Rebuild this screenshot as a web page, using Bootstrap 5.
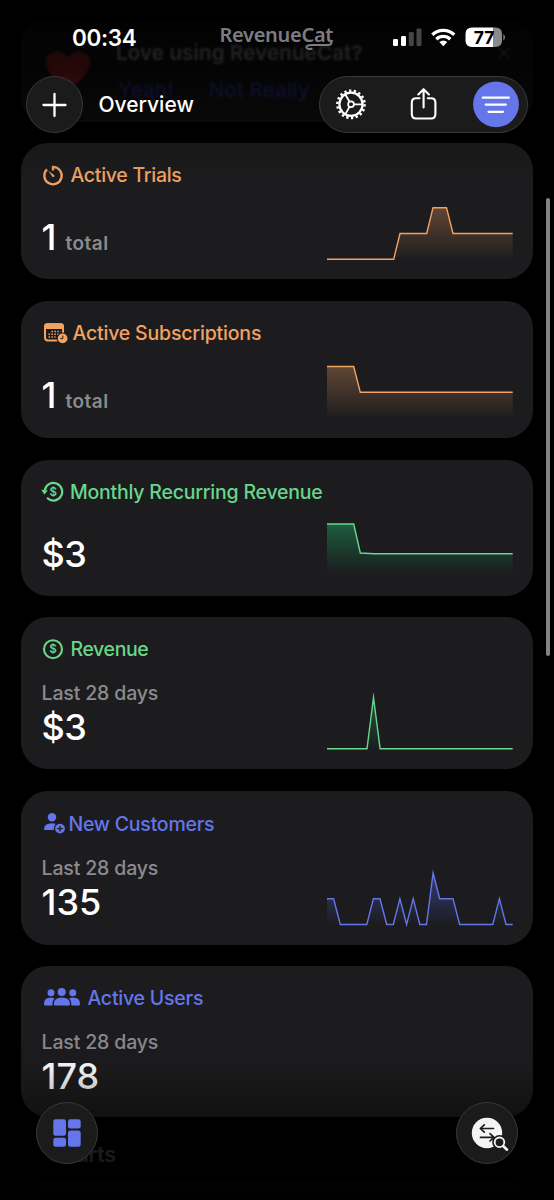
<!DOCTYPE html>
<html lang="en" data-bs-theme="dark">
<head>
<meta charset="utf-8">
<meta name="viewport" content="width=device-width, initial-scale=1">
<title>Overview</title>
<link href="https://cdn.jsdelivr.net/npm/bootstrap@5.3.0/dist/css/bootstrap.min.css" rel="stylesheet">
<style>
  body { background:#000; font-family:Inter,"Liberation Sans",sans-serif; color:#fff; }
  .screen { width:554px; height:1200px; }
  svg { display:block; overflow:visible; flex:none; }
  .feed { padding:20px 21px 0; }
  .promo { height:102px; border-radius:24px; background:#1c1c1e; margin-bottom:21px; padding:20px 20px 0 24px; font-size:20.5px; font-weight:600; line-height:26px; letter-spacing:.15px; }
  .promo > * { filter:blur(1.3px); }
  .promo-actions { margin-top:11px; gap:35px; color:#4247d8; padding-left:2px; font-weight:500; }
  .metric { background:#1c1c1e; border-radius:27px; padding:19px 20px 0 21px; }
  .ttl { height:26px; line-height:26px; font-size:19.5px; font-weight:500; white-space:nowrap; letter-spacing:-.22px; }
  .ttl span { margin-left:-.6px; }
  .ttl .t1 { letter-spacing:-.28px; } .ttl .t4 { letter-spacing:-.38px; } .ttl .t2 { letter-spacing:-.18px; }
  .sub { margin-top:19px; margin-left:-.5px; line-height:24px; font-size:19.5px; font-weight:500; color:#8b8b8e; white-space:nowrap; letter-spacing:-.15px; }
  .val { line-height:40px; font-size:36px; font-weight:450; margin-top:2px; margin-left:-.5px; }
  .val.solo { margin-top:29px; }
  .val.money { letter-spacing:-.6px; }
  .unit { font-size:19px; font-weight:600; color:#8b8b8e; margin-left:9px; letter-spacing:.5px; }
  .orange { color:#f2a261; } .green { color:#67d78a; } .indigo { color:#6476ea; }
  .spark { align-self:flex-end; margin-bottom:14px; width:186px; height:70px; }
  .spark polyline { fill:none; stroke:currentColor; stroke-width:1.4; stroke-miterlimit:10; }
  .shade-top { height:190px; background:linear-gradient(#000 0,rgba(0,0,0,.88) 40px,rgba(0,0,0,.86) 70px,rgba(0,0,0,.7) 120px,rgba(0,0,0,.16) 144px,rgba(0,0,0,0) 180px); }
  .shade-bottom { height:170px; background:linear-gradient(rgba(0,0,0,0) 0,rgba(0,0,0,.07) 40px,rgba(0,0,0,.4) 86px,rgba(0,0,0,.89) 118px,rgba(0,0,0,.93) 150px,#000 170px); }
  .status { height:76px; padding:0 50px 0 72px; }
  .clock { font-size:22.5px; font-weight:600; line-height:28px; margin-top:24px; width:147.500px; letter-spacing:-.35px; }
  .brand { font-family:"Noto Sans",sans-serif; font-size:20px; font-weight:600; line-height:28px; margin-top:21px; color:#7d7d80; width:160.500px; letter-spacing:-.3px; }
  .toolbar { height:57px; padding:0 26px; }
  .glass { background:#1b1b1c; border:1px solid #39393b; }
  .round { width:57px; height:57px; border-radius:50%; }
  .head { font-size:21px; font-weight:500; margin-left:15.500px; }
  .pill { width:209px; height:57px; border-radius:29px; }
  .dock { width:62px; height:62px; border-radius:50%; }
  .scrollbar { left:546px; top:198px; width:4px; height:458px; border-radius:2px; background:#838385; }
  .charts { height:64px; padding:23px 0 0 27px; font-size:21.500px; font-weight:600; line-height:28px; letter-spacing:-.3px; }
</style>
</head>
<body>
<div class="screen position-relative overflow-hidden">

  <svg width="0" height="0" class="position-absolute">
    <defs>
      <linearGradient id="go" x1="0" y1="0" x2="0" y2="1"><stop offset="0" stop-color="#f2a261" stop-opacity=".32"/><stop offset="1" stop-color="#f2a261" stop-opacity="0.02"/></linearGradient>
      <linearGradient id="gg" x1="0" y1="0" x2="0" y2="1"><stop offset="0" stop-color="#20a860" stop-opacity=".48"/><stop offset="1" stop-color="#109a60" stop-opacity="0.01"/></linearGradient>
      <linearGradient id="gi" x1="0" y1="0" x2="0" y2="1"><stop offset="0" stop-color="#5569ff" stop-opacity=".42"/><stop offset="1" stop-color="#5569ff" stop-opacity="0"/></linearGradient>
    </defs>
  </svg>

  <main class="feed">
    <section class="promo d-flex">
      <svg width="48" height="44" viewBox="0 0 48 44"><path d="M24 43C12 34 2 26 2 15C2 3 18 1 24 11C30 1 46 3 46 15C46 26 36 34 24 43Z" fill="#ff3540" transform="translate(-1 7)"/></svg>
      <div class="flex-grow-1" style="margin-left:23px">
        <div>Love using RevenueCat?</div>
        <div class="promo-actions d-flex"><span>Yeah!</span><span>Not Really</span></div>
      </div>
      <svg width="16" height="30" viewBox="0 0 16 30"><path d="M2 8L12 18M12 8L2 18" stroke="#777" stroke-width="2"/></svg>
    </section>

    <section class="metric d-flex justify-content-between" style="height:136px;margin-bottom:22px">
      <div>
        <div class="ttl orange d-flex">
          <svg width="29" height="26" viewBox="0 0 29 26" fill="none" stroke="currentColor"><path d="M11 8.4V4.9A8.7 8.7 0 1 1 5 7.3" stroke-width="2.300"/><path d="M6.3 8.8L12.4 13.2Q13 15.3 10.6 15Z" fill="currentColor" stroke="none"/></svg>
          <span class="t1">Active Trials</span>
        </div>
        <div class="val solo">1<span class="unit">total</span></div>
      </div>
      <svg class="spark orange" viewBox="327 195 186 70"><path fill="url(#go)" d="M327 257H394.3L400 233.5H426.7L433 207.7H446.5L453 233.5H512.7V257Z"/><polyline points="327,259.2 393.7,259.2 400,233.5 426.7,233.5 433,207.7 446.5,207.7 453,233.5 512.7,233.5"/></svg>
    </section>

    <section class="metric d-flex justify-content-between" style="height:137px;margin-bottom:22px">
      <div>
        <div class="ttl orange d-flex">
          <svg width="31" height="26" viewBox="0 0 31 26" fill="currentColor"><rect x="3" y="4.2" width="18" height="16.4" rx="3" fill="none" stroke="currentColor" stroke-width="2"/><path d="M2 9V6.2Q2 3.2 5 3.2H19Q22 3.2 22 6.2V9Z"/><path d="M9.5 11.4h9M6.5 14.2h12M6.5 17h7" stroke="currentColor" stroke-width="1.5" stroke-dasharray="1.5 1.4"/><circle cx="20.6" cy="18.4" r="6" fill="#1c1c1e"/><circle cx="20.6" cy="18.4" r="4.9"/><path d="M20.8 15.6v3h-2.4" stroke="#1c1c1e" fill="none"/></svg>
          <span class="t2">Active Subscriptions</span>
        </div>
        <div class="val solo">1<span class="unit">total</span></div>
      </div>
      <svg class="spark orange" viewBox="327 354 186 70"><path fill="url(#go)" d="M327 416V366.5H353.7L360.3 392.3H512.7V416Z"/><polyline points="327,366.5 353.7,366.5 360.3,392.3 512.7,392.3"/></svg>
    </section>

    <section class="metric d-flex justify-content-between" style="height:136px;margin-bottom:21px">
      <div>
        <div class="ttl green d-flex">
          <svg width="28.5" height="26" viewBox="0 0 28.5 26" fill="none" stroke="currentColor"><path d="M5 18.8A8.8 8.8 0 1 0 2.7 11.5" stroke-width="2.2"/><path d="M-.7 10.8L5.9 11.4L2.3 15.6Z" fill="currentColor" stroke="none"/><text x="11.2" y="16.8" text-anchor="middle" font-size="11.5" font-weight="600" fill="currentColor" stroke="none">$</text></svg>
          <span class="t3">Monthly Recurring Revenue</span>
        </div>
        <div class="val solo money">$3</div>
      </div>
      <svg class="spark green" viewBox="327 512 186 70"><path fill="url(#gg)" d="M327 573V524H353.7L360.3 553L374 553.7H512.7V573Z"/><polyline points="327,524 353.7,524 360.3,553 374,553.7 512.7,553.7"/></svg>
    </section>

    <section class="metric d-flex justify-content-between" style="height:152px;margin-bottom:22px">
      <div>
        <div class="ttl green d-flex">
          <svg width="29" height="26" viewBox="0 0 29 26"><circle cx="11" cy="13.2" r="9" fill="none" stroke="currentColor" stroke-width="2.1"/><text x="11" y="17.2" text-anchor="middle" font-size="11.5" font-weight="600" fill="currentColor">$</text></svg>
          <span class="t4">Revenue</span>
        </div>
        <div class="sub">Last 28 days</div>
        <div class="val money">$3</div>
      </div>
      <svg class="spark green" viewBox="327 685 186 70"><path fill="url(#gg)" d="M367 748.8L373.5 697L380.3 748.8Z"/><polyline points="327,748.8 367,748.8 373.5,697.5 380.1,748.8 512.7,748.8"/></svg>
    </section>

    <section class="metric d-flex justify-content-between" style="height:154px;margin-bottom:21px;padding-top:20px">
      <div>
        <div class="ttl indigo d-flex">
          <svg width="27" height="26" viewBox="0 0 27 26" fill="currentColor"><circle cx="10" cy="6.2" r="4.2"/><path d="M2 18.2Q2 12.2 10 12.2Q18 12.2 18 19H3Q2 19 2 18.2Z"/><circle cx="18" cy="17.6" r="6.2" fill="#1c1c1e"/><circle cx="18" cy="17.6" r="4.9"/><path d="M18 14.8v5.6M15.2 17.6h5.6" stroke="#1c1c1e" stroke-width="1.3"/></svg>
          <span class="t5">New Customers</span>
        </div>
        <div class="sub">Last 28 days</div>
        <div class="val">135</div>
      </div>
      <svg class="spark indigo" viewBox="327 861 186 70"><path fill="url(#gi)" d="M327 924.5V898.7H333.6L340.3 924.5H366.8L373.4 898.7H380L386.7 924.5H393.3L399.9 898.7L406.6 924.5L413.2 898.7L419.8 924.5H426.5L433.1 873L439.7 898.7H453L459.6 924.5H492.8L499.4 898.7L506 924.5Z"/><polyline points="327,898.7 333.6,898.7 340.3,924.5 366.8,924.5 373.4,898.7 380,898.7 386.7,924.5 393.3,924.5 399.9,898.7 406.6,924.5 413.2,898.7 419.8,924.5 426.5,924.5 433.1,873 439.7,898.7 453,898.7 459.6,924.5 492.8,924.5 499.4,898.7 506,924.5 512.7,924.5"/></svg>
    </section>

    <section class="metric" style="height:151px">
      <div class="ttl indigo d-flex">
        <svg width="46" height="26" viewBox="0 0 46 26" fill="currentColor"><circle cx="9" cy="7.8" r="3.5"/><circle cx="30.8" cy="7.8" r="3.5"/><path d="M2 19Q2 12.6 9 12.6Q11 12.6 12.5 13.4Q10.4 15.4 10.4 20.4H3Q2 20.4 2 19ZM38 19Q38 12.6 30.8 12.6Q28.8 12.6 27.2 13.4Q29.4 15.4 29.4 20.4H37Q38 20.4 38 19Z"/><circle cx="19.7" cy="7" r="4"/><path d="M11.8 19Q11.8 12.4 19.8 12.4Q28 12.4 28 19Q28 20.4 27 20.4H12.8Q11.8 20.4 11.8 19Z"/></svg>
        <span class="t6">Active Users</span>
      </div>
      <div class="sub">Last 28 days</div>
      <div class="val">178</div>
    </section>

    <div class="charts">Charts</div>
    <section class="metric" style="height:120px"></section>
  </main>

  <div class="shade-top position-absolute top-0 start-0 w-100"></div>
  <div class="shade-bottom position-absolute bottom-0 start-0 w-100"></div>
  <div class="scrollbar position-absolute"></div>

  <header class="position-absolute top-0 start-0 w-100">
    <div class="status d-flex">
      <div class="clock"><span>00:34</span></div>
      <div class="brand"><span>RevenueCat</span>
        <svg width="1" height="1" style="margin-top:-28px"><path d="M110.500 19.500Q113.500 24 107 24H91Q86.300 24 86.300 26.500Q87 28.500 91.500 27.800" fill="none" stroke="#7d7d80" stroke-width="2" stroke-linecap="round"/></svg>
      </div>
      <svg width="112" height="24" viewBox="392 26 112 24" style="margin:26px 0 0 12px">
        <g fill="#fff"><rect x="393" y="39" width="5" height="7" rx="1.3"/><rect x="401" y="36" width="5" height="10" rx="1.3"/></g>
        <g fill="#454547"><rect x="408.800" y="32" width="5" height="14" rx="1.300"/><rect x="416.500" y="28.500" width="5" height="17.500" rx="1.300"/></g>
        <g fill="none" stroke="#fff" stroke-width="3.300"><path d="M432.300 34.700A16 16 0 0 1 454.300 34.700"/><path d="M436.300 39.200A10 10 0 0 1 450.300 39.200"/></g><path d="M439.300 42Q443.300 38.900 447.300 42L443.300 46.200Z" fill="#fff"/>
        <path d="M472 27.500H493.500V47H472Q465.500 47 465.500 40.500V34Q465.500 27.500 472 27.500Z" fill="#fff"/><path d="M493.500 27.500H495.500Q502 27.500 502 34V40.500Q502 47 495.500 47H493.500Z" fill="#8a8a8a"/><path d="M503.400 34Q506.500 37.200 503.400 40.600Z" fill="#8a8a8a"/>
        <text x="484" y="43.600" text-anchor="middle" font-size="17.500" font-weight="700" fill="#000">77</text>
      </svg>
    </div>
    <div class="toolbar d-flex align-items-center">
      <div class="glass round d-flex align-items-center justify-content-center"><svg width="24" height="24" viewBox="0 0 24 24"><path d="M11.500 1V23M.500 12H22.500" stroke="#fff" stroke-width="2.300" stroke-linecap="round"/></svg></div>
      <div class="head"><span>Overview</span></div>
      <div class="glass pill ms-auto">
        <svg width="207" height="55" viewBox="320 77 207 55" fill="none" stroke="#fff" stroke-linecap="round" stroke-linejoin="round">
          <circle cx="351" cy="104.300" r="13.600" stroke-width="2.600" stroke-linecap="butt" stroke-dasharray="2.300 2.447"/>
          <circle cx="351" cy="104.300" r="11.600" stroke-width="2.200"/><circle cx="351" cy="104.300" r="2.900" stroke-width="1.700"/>
          <path d="M354 104.300H362M349.500 101.700L345.400 94.500M349.500 106.900L345.400 114.100" stroke-width="1.800"/>
          <path d="M419.500 98.200H416.200Q411.800 98.200 411.800 102.600V114Q411.800 118.500 416.200 118.500H431Q435.400 118.500 435.400 114V102.600Q435.400 98.200 431 98.200H427.800M423.600 107.500V89.500M418.300 94.400L423.600 89.200L428.900 94.400" stroke-width="2.100"/>
          <circle cx="496" cy="104.300" r="22.900" fill="#6476ea" stroke="none"/>
          <path d="M482.800 97.700H508.800M485.800 104.700H505.800M488.600 111.800H503" stroke-width="2.300"/>
        </svg>
      </div>
    </div>
  </header>

  <nav class="position-absolute bottom-0 start-0 w-100 d-flex justify-content-between" style="padding:0 36px 36px">
    <div class="glass dock d-flex align-items-center justify-content-center"><svg width="28" height="28" viewBox="0 0 28 28" fill="#6476ea"><rect x=".3" y=".3" width="12.700" height="16.400" rx="2.300"/><rect x="15" y=".3" width="12.700" height="9.200" rx="2.300"/><rect x=".3" y="18.700" width="12.700" height="9" rx="2.300"/><rect x="15" y="11.500" width="12.700" height="16.200" rx="2.300"/></svg></div>
    <div class="glass dock"><svg width="60" height="60" viewBox="457 1103 60 60" fill="none" stroke-linecap="round" stroke-linejoin="round">
      <circle cx="487" cy="1133" r="15.200" fill="#f4f4f4"/>
      <path d="M493.500 1128.500H480.500M484.300 1124.800L480.300 1128.500L484.300 1132.200M480.500 1137.300H493M490 1133.600L494 1137.300L490 1141" stroke="#1b1b1c" stroke-width="1.700"/>
      <circle cx="499.500" cy="1142.300" r="7.300" fill="#1b1b1c"/><path d="M499.500 1142.300L507 1149.500" stroke="#1b1b1c" stroke-width="5"/>
      <circle cx="499.500" cy="1142.300" r="4.800" fill="#1b1b1c" stroke="#f4f4f4" stroke-width="1.800"/><path d="M503.200 1146L507 1149.700" stroke="#f4f4f4" stroke-width="2.600"/>
    </svg></div>
  </nav>
</div>
<script src="https://cdn.jsdelivr.net/npm/bootstrap@5.3.0/dist/js/bootstrap.bundle.min.js"></script>
</body>
</html>
